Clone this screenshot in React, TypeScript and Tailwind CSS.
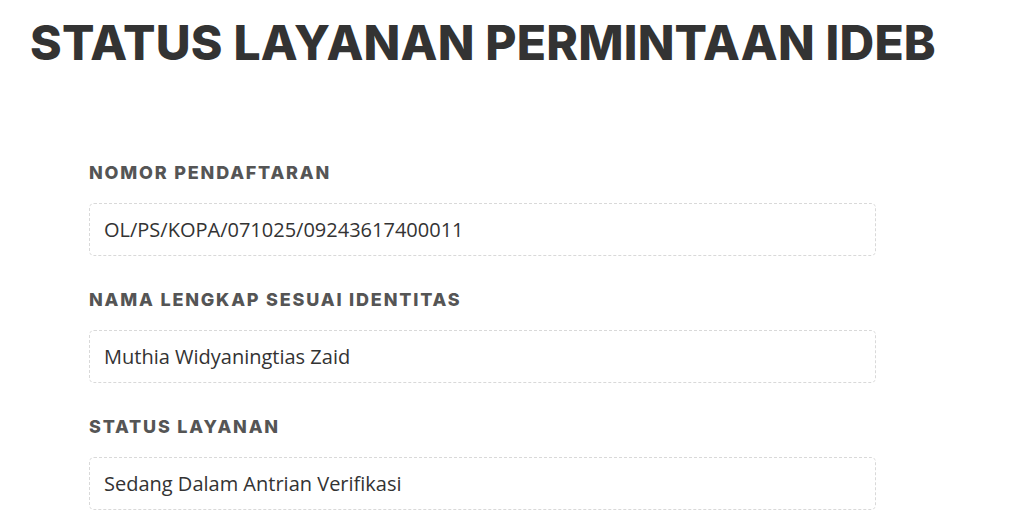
export default function App() {
  const fields = [
    { label: 'NOMOR PENDAFTARAN', value: 'OL/PS/KOPA/071025/09243617400011' },
    { label: 'NAMA LENGKAP SESUAI IDENTITAS', value: 'Muthia Widyaningtias Zaid' },
    { label: 'STATUS LAYANAN', value: 'Sedang Dalam Antrian Verifikasi' },
  ]

  return (
    <div className="min-h-screen bg-white">
      {/* judul */}
      <h1 className="pl-[30px] pt-[15px] text-[48px] leading-[56px] font-extrabold tracking-[0.2px] text-[#333333] font-['Inter',sans-serif]">
        STATUS LAYANAN PERMINTAAN IDEB
      </h1>

      {/* form status */}
      <div className="ml-[89px] w-[787px] pt-[90px] flex flex-col gap-[32px]">
        {fields.map((f) => (
          <div key={f.label} className="flex flex-col">
            <label className="text-[18px] leading-[24px] font-extrabold tracking-[1.8px] text-[#555555] font-['Inter',sans-serif]">
              {f.label}
            </label>
            <div className="mt-[18px] h-[53px] flex items-center px-[14px] border border-dashed border-[#d9d9d9] rounded-[5px] text-[20px] text-[#333333] font-['Open_Sans',sans-serif]">
              {f.value}
            </div>
          </div>
        ))}
      </div>
    </div>
  )
}
